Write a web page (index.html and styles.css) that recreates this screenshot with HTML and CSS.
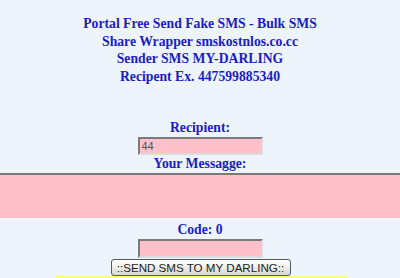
FILE: index.html
```html
<!DOCTYPE html>
<html>
<head>
<meta charset="utf-8">
<link rel="stylesheet" href="styles.css">
</head>
<body>
<div class="page">
  <div class="intro">
    <div>Portal Free Send Fake SMS - Bulk SMS</div>
    <div>Share Wrapper smskostnlos.co.cc</div>
    <div>Sender SMS MY-DARLING</div>
    <div>Recipent Ex. 447599885340</div>
  </div>
  <form class="form">
    <div class="label label-first">Recipient:</div>
    <input class="field" type="text" value="44">
    <div class="label label-msg">Your Messagge:</div>
    <textarea class="message"></textarea>
    <div class="label label-code">Code: 0</div>
    <input class="field field-code" type="text" value="">
    <button class="send" type="button">::SEND SMS TO MY DARLING::</button>
    <div class="bar"></div>
  </form>
</div>
</body>
</html>
```
FILE: styles.css
```css
html, body {
  margin: 0;
  padding: 0;
  background: #edf4fb;
}
.page {
  width: 400px;
  height: 278px;
  overflow: hidden;
  font-family: "Liberation Serif", "Times New Roman", serif;
  font-weight: bold;
  color: #1c1cc4;
}
.intro {
  padding-top: 15px;
  text-align: center;
  font-size: 13.7px;
  line-height: 17.5px;
}
.form {
  margin: 36px 0 0;
  display: flex;
  flex-direction: column;
  align-items: center;
}
.label {
  font-size: 13.7px;
  line-height: 14px;
  text-align: center;
}
.label-first {
  margin-bottom: 2px;
}
.label-msg {
  margin-top: 2px;
}
.field {
  box-sizing: border-box;
  width: 125px;
  height: 18px;
  margin: 0;
  padding: 0 2px;
  background: #ffc0cb;
  border: 2px solid #dcdcdc;
  border-top-color: #7a7a7a;
  border-left-color: #7a7a7a;
  font-family: "Liberation Sans", Arial, sans-serif;
  font-weight: normal;
  font-size: 11px;
  color: #555;
  outline: none;
}
.message {
  box-sizing: border-box;
  display: block;
  width: 400px;
  height: 46px;
  margin: 2px 0 0;
  padding: 0;
  resize: none;
  background: #ffc0cb;
  border: 0;
  border-top: 2px solid #7a7a7a;
  border-bottom: 1px solid #f6f6f6;
  outline: none;
}
.label-code {
  margin-top: 4px;
  margin-bottom: 2px;
}
.field-code {
  height: 19px;
}
.send {
  box-sizing: border-box;
  width: 180px;
  height: 17px;
  margin: 1px 0 0 1px;
  padding: 0;
  border: 1px solid #4f5b6b;
  border-radius: 3px;
  background: linear-gradient(#ffffff, #e9e9e4 60%, #d9d9d2);
  font-family: "Liberation Sans", Arial, sans-serif;
  font-weight: normal;
  font-size: 11.6px;
  line-height: 15px;
  color: #222;
}
.bar {
  width: 291px;
  height: 3px;
  background: #fbfb88;
  margin-left: 3px;
}
```
